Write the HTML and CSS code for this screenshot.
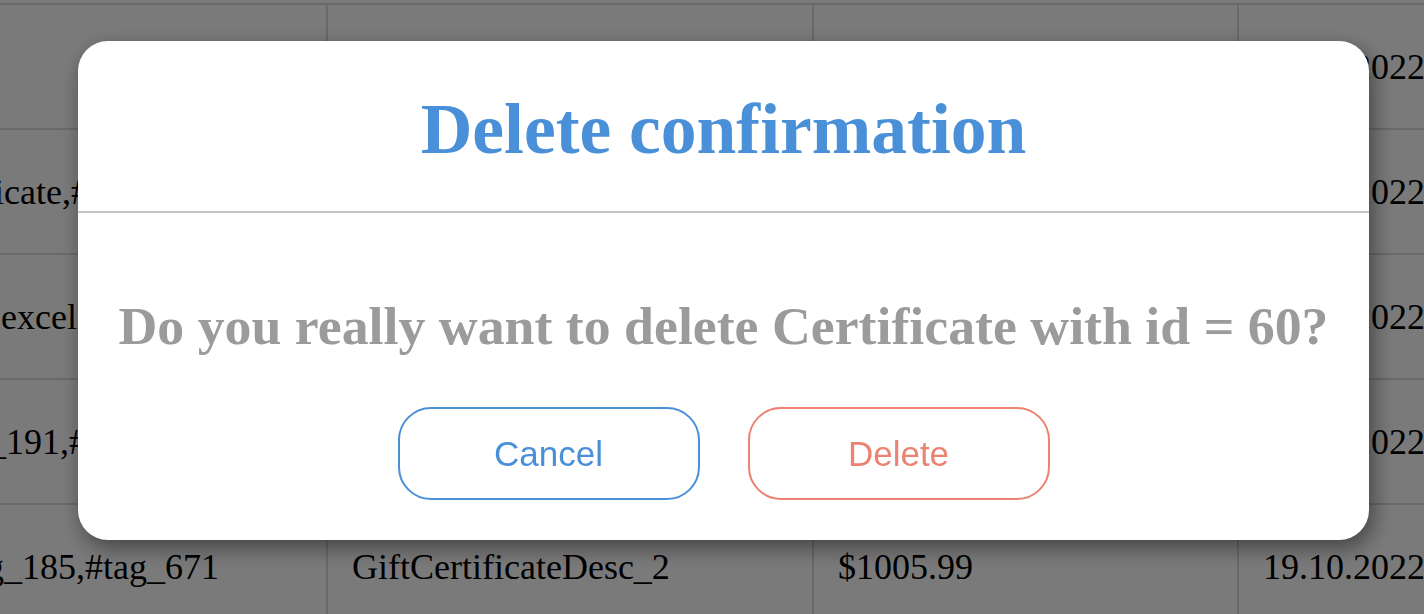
FILE: index.html
```html
<!DOCTYPE html>
<html lang="en">
<head>
<meta charset="utf-8">
<title>Certificates</title>
<link rel="stylesheet" href="styles.css">
</head>
<body>
<div class="table">
  <div class="row">
    <div class="cell"></div>
    <div class="cell">GiftCertificateDesc_1</div>
    <div class="cell">$100.00</div>
    <div class="cell">18.10.2022</div>
  </div>
  <div class="row">
    <div class="cell">#silicate,#tag_12</div>
    <div class="cell">GiftCertificateDesc_5</div>
    <div class="cell">$250.50</div>
    <div class="cell">18.10.2022</div>
  </div>
  <div class="row">
    <div class="cell">#so excellent,#tag_3</div>
    <div class="cell">GiftCertificateDesc_4</div>
    <div class="cell">$75.20</div>
    <div class="cell">19.10.2022</div>
  </div>
  <div class="row">
    <div class="cell">#tg_191,#tag_204</div>
    <div class="cell">GiftCertificateDesc_3</div>
    <div class="cell">$520.00</div>
    <div class="cell">19.10.2022</div>
  </div>
  <div class="row">
    <div class="cell">#tag_185,#tag_671</div>
    <div class="cell">GiftCertificateDesc_2</div>
    <div class="cell">$1005.99</div>
    <div class="cell">19.10.2022</div>
  </div>
</div>

<div class="overlay">
  <div class="modal">
    <div class="modal-header">
      <h2 class="modal-title">Delete confirmation</h2>
    </div>
    <div class="modal-body">
      <p class="modal-text">Do you really want to delete Certificate with id = 60?</p>
      <div class="actions">
        <button class="btn btn-cancel">Cancel</button>
        <button class="btn btn-delete">Delete</button>
      </div>
    </div>
  </div>
</div>
</body>
</html>
```

FILE: styles.css
```css
html, body {
  margin: 0;
  padding: 0;
  background: #ffffff;
  overflow: hidden;
}

body {
  font-family: "Liberation Serif", "Times New Roman", serif;
  width: 1424px;
  height: 614px;
}

.table {
  display: grid;
  grid-template-columns: 410px 486px 425px 320px;
  margin-left: -84px;
  padding-top: 3px;
  width: max-content;
}

.row {
  display: contents;
}

.cell {
  box-sizing: border-box;
  height: 125px;
  border-top: 2px solid #dcdcdc;
  border-left: 2px solid #dcdcdc;
  padding: 0 22px 0 24px;
  display: flex;
  align-items: center;
  font-size: 36px;
  color: #000;
  white-space: nowrap;
  overflow: hidden;
}

.overlay {
  position: fixed;
  inset: 0;
  background: rgba(0, 0, 0, 0.52);
  padding: 41px 0 0 78px;
  box-sizing: border-box;
}

.modal {
  width: 1291px;
  height: 499px;
  box-sizing: border-box;
  background: #fff;
  border-radius: 30px;
  box-shadow: 4px 8px 22px rgba(0, 0, 0, 0.45);
  display: flex;
  flex-direction: column;
}

.modal-header {
  padding: 48px 0 42px;
  border-bottom: 2px solid #c6c6c6;
  text-align: center;
}

.modal-title {
  margin: 0;
  font-size: 71.5px;
  line-height: 80px;
  font-weight: bold;
  color: #4a90d9;
}

.modal-body {
  padding: 84px 0 40px;
  display: flex;
  flex-direction: column;
  align-items: center;
}

.modal-text {
  margin: 0;
  font-size: 53.8px;
  line-height: 59px;
  font-weight: bold;
  color: #9b9b9b;
  white-space: nowrap;
}

.actions {
  margin-top: 51px;
  display: flex;
  gap: 48px;
}

.btn {
  width: 302px;
  height: 93px;
  border-radius: 33px;
  background: #fff;
  font-family: "Liberation Sans", Arial, sans-serif;
  font-size: 35px;
  cursor: pointer;
  padding: 0;
}

.btn-cancel {
  border: 2px solid #4a90d9;
  color: #4a90d9;
}

.btn-delete {
  border: 2px solid #ec8271;
  color: #ec8271;
}
```
